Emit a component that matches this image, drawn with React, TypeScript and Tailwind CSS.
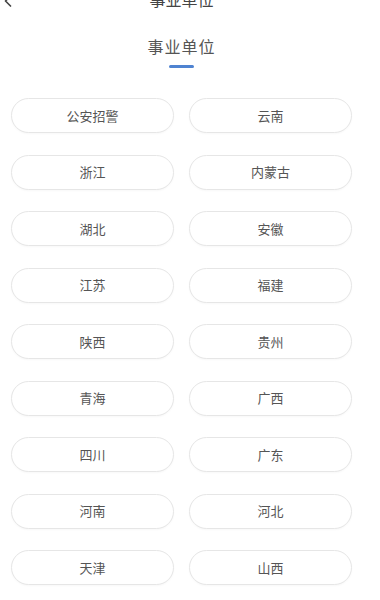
import { ChevronLeft } from 'lucide-react';

const regions = [
  ['公安招警', '云南'],
  ['浙江', '内蒙古'],
  ['湖北', '安徽'],
  ['江苏', '福建'],
  ['陕西', '贵州'],
  ['青海', '广西'],
  ['四川', '广东'],
  ['河南', '河北'],
  ['天津', '山西'],
];

export default function App() {
  return (
    <div className="min-h-screen w-[380px] bg-white text-[#555] font-['Noto_Sans_CJK_SC',sans-serif]">
      <div className="w-[363px]">
        {/* Top bar, mostly scrolled off */}
        <div className="h-[20px] overflow-hidden">
          <div className="-mt-[11px] relative flex h-[20px] items-center justify-center">
            <ChevronLeft className="absolute -left-[2px] top-[2px] w-5 h-5 text-[#444]" strokeWidth={2} />
            <span className="text-[16px] leading-none text-[#444]">事业单位</span>
          </div>
        </div>

        {/* Section title */}
        <div className="flex flex-col items-center pt-[17px]">
          <h1 className="text-[16px] leading-[18px] text-[#555] tracking-[1px]">事业单位</h1>
          <div className="mt-[10px] h-[3px] w-[25px] rounded-full bg-[#4f83d1]" />
        </div>

        {/* Options grid */}
        <div className="mt-[30px] px-[11px] flex flex-col gap-[21.5px]">
          {regions.map(([a, b]) => (
            <div key={a} className="grid grid-cols-2 gap-[15px]">
              {[a, b].map((name) => (
                <button
                  key={name}
                  className="h-[35px] rounded-full border border-[#e6e6e6] bg-white text-[13px] text-[#555] shadow-[0_1px_2px_rgba(0,0,0,0.03)]"
                >
                  {name}
                </button>
              ))}
            </div>
          ))}
        </div>
      </div>
    </div>
  );
}
